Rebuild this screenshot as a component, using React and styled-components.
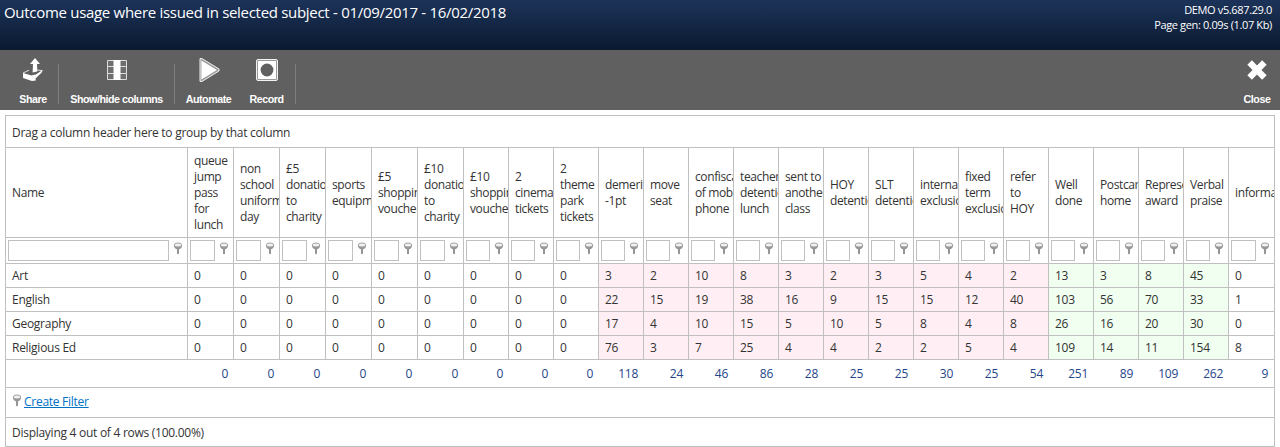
import React from "react";
import styled, { createGlobalStyle } from "styled-components";

const LINE = "#c0c0c0";

const GlobalStyle = createGlobalStyle`
  * { box-sizing: border-box; }
  body {
    margin: 0;
    background: #fff;
    color: #333;
    font: 12px/16px "Open Sans", "Noto Sans", sans-serif;
    letter-spacing: -0.27px;
  }
`;

const Header = styled.header`
  display: flex;
  justify-content: space-between;
  height: 50px;
  padding: 2px 8px 0 4px;
  color: #fff;
  background: linear-gradient(#1c3359, #0b1a30);
`;

const Title = styled.h1`
  margin: 0;
  font-size: 15px;
  font-weight: 400;
  line-height: 20px;
  letter-spacing: -0.3px;
  white-space: nowrap;
`;

const Build = styled.div`
  font-size: 11px;
  line-height: 15px;
  letter-spacing: -0.36px;
  text-align: right;
  white-space: nowrap;
`;

const Toolbar = styled.nav`
  display: flex;
  height: 60px;
  background: #606060;
`;

const ToolButton = styled.button`
  display: flex;
  flex-direction: column;
  align-items: center;
  justify-content: space-between;
  width: ${(p) => p.$width}px;
  height: 60px;
  padding: 5px 0 5px ${(p) => p.$indent || 0}px;
  border: 0;
  background: none;
  color: #fff;
  font: bold 10.7px/12px "Liberation Sans", Arial, sans-serif;
  letter-spacing: -0.46px;
  white-space: nowrap;
  margin-left: ${(p) => (p.$end ? "auto" : 0)};
`;

const Separator = styled.span`
  width: 1px;
  height: 40px;
  margin: 14px 0 0 ${(p) => p.$gap || 0}px;
  background: #7d7d7d;
`;

const Grid = styled.section`
  margin: 5px 5px 0;
  border: 1px solid ${LINE};
`;

const Bar = styled.div`
  display: flex;
  align-items: center;
  height: ${(p) => p.$height}px;
  padding: ${(p) => p.$drop || 0}px 6px 0;
  border-bottom: ${(p) => (p.$last ? 0 : 1)}px solid ${LINE};
`;

const Row = styled.div`
  display: grid;
  grid-template-columns: 182px repeat(6, 46px) repeat(17, 45px) 45px;
  height: ${(p) => p.$height}px;
  border-bottom: 1px solid ${LINE};
`;

const TONES = { bad: "#ffeff4", good: "#f0fff0", plain: "#fff" };

const Cell = styled.div`
  display: flex;
  align-items: center;
  min-width: 0;
  overflow: hidden;
  padding-left: 6px;
  white-space: pre;
  background: ${(p) => TONES[p.$tone || "plain"]};
  border-right: 1px solid ${LINE};
  &:last-child { border-right: 0; }
`;

const HeadCell = styled(Cell)`
  padding-top: 1px;
  letter-spacing: -0.38px;
`;

const FilterCell = styled(Cell)`
  padding: 2px 4px 2px 2px;
  justify-content: space-between;
`;

const FilterInput = styled.input`
  flex: 1;
  min-width: 0;
  height: 21px;
  margin-right: 4px;
  padding: 0;
  border: 1px solid ${LINE};
  background: #fff;
`;

const TotalCell = styled.div`
  padding: 6px 6px 0 0;
  text-align: right;
  color: #24468a;
`;

const FilterLink = styled.a`
  margin: -2px 0 0 2px;
  color: #0072c6;
  text-decoration: underline;
`;

const PinSvg = styled.svg`
  flex: none;
  margin-top: -4px;
`;

const Pin = () => (
  <PinSvg width="10" height="13" viewBox="0 0 10 13">
    <path d="M0.8 3 Q1 6.4 4 7.2 L4 11.5 L5 12.6 L6 11.5 L6 7.2 Q9 6.4 9.2 3 Z" fill="#949494" />
    <ellipse cx="5" cy="3" rx="3.7" ry="2" fill="#f1f1f1" stroke="#a0a0a0" strokeWidth="1" />
  </PinSvg>
);

const ShareIcon = () => (
  <svg width="28" height="28" viewBox="0 0 28 28">
    <path d="M4 18 L10 15.2 M18 15 L23.5 15.6 L17 20.5" stroke="#ddd" fill="none" />
    <path d="M16 3 L21 9 L18 9 L18.3 16.5 L13.6 17.5 L14 9 L11 9 Z" fill="#fff" />
    <path d="M4 18 L12.5 20.5 L16 19.6 L16.8 25.5 L13 26 L4 23 Z M16 20 L23.5 15.2 L22.5 17.8 L16.5 23.5 Z" fill="#fff" />
  </svg>
);

const ColumnsIcon = () => (
  <svg width="28" height="28" viewBox="0 0 28 28">
    <path d="M4.5 5.5h19v19h-19z M4 11.5h20 M4 18.5h20" fill="#6e6e6e" stroke="#dcdcdc" />
    <path d="M10.5 5h7v20h-7z" fill="#fff" />
  </svg>
);

const PlayIcon = () => (
  <svg width="28" height="28" viewBox="0 0 28 28">
    <path d="M5 3.6 L7 3.6 L24 14 L24 16 L7 26.4 L5 26.4 Z" fill="#999" stroke="#f2f2f2" strokeLinejoin="round" />
    <path d="M6.4 5.4 L22 15 L6.4 24.6 Z" fill="#fff" />
  </svg>
);

const RecordIcon = () => (
  <svg width="28" height="28" viewBox="0 0 28 28">
    <rect x="3.5" y="4.5" width="21" height="21" rx="1.5" fill="#999" stroke="#f2f2f2" />
    <rect x="5" y="6" width="18" height="18" fill="#fff" />
    <circle cx="14" cy="15" r="6.4" fill="#606060" />
  </svg>
);

const CloseIcon = () => (
  <svg width="28" height="28" viewBox="0 0 28 28">
    <path d="M6.6 7.6 L21.4 22.4 M21.4 7.6 L6.6 22.4" stroke="#fff" strokeWidth="6.4" />
  </svg>
);

// Each column: heading, one value per subject, total, tone.
const COLUMNS = [
  ["queue\njump\npass\nfor\nlunch", 0, 0, 0, 0, 0],
  ["non\nschool\nuniform\nday", 0, 0, 0, 0, 0],
  ["£5\ndonation\nto\ncharity", 0, 0, 0, 0, 0],
  ["sports\nequipment", 0, 0, 0, 0, 0],
  ["£5\nshopping\nvoucher", 0, 0, 0, 0, 0],
  ["£10\ndonation\nto\ncharity", 0, 0, 0, 0, 0],
  ["£10\nshopping\nvoucher", 0, 0, 0, 0, 0],
  ["2\ncinema\ntickets", 0, 0, 0, 0, 0],
  ["2\ntheme\npark\ntickets", 0, 0, 0, 0, 0],
  ["demerit\n-1pt", 3, 22, 17, 76, 118, "bad"],
  ["move\nseat", 2, 15, 4, 3, 24, "bad"],
  ["confiscation\nof mobile\nphone", 10, 19, 10, 7, 46, "bad"],
  ["teacher\ndetention\nlunch", 8, 38, 15, 25, 86, "bad"],
  ["sent to\nanother\nclass", 3, 16, 5, 4, 28, "bad"],
  ["HOY\ndetention", 2, 9, 10, 4, 25, "bad"],
  ["SLT\ndetention", 3, 15, 5, 2, 25, "bad"],
  ["internal\nexclusion", 5, 15, 8, 2, 30, "bad"],
  ["fixed\nterm\nexclusion", 4, 12, 4, 5, 25, "bad"],
  ["refer\nto\nHOY", 2, 40, 8, 4, 54, "bad"],
  ["Well\ndone", 13, 103, 26, 109, 251, "good"],
  ["Postcard\nhome", 3, 56, 16, 14, 89, "good"],
  ["Represent\naward", 8, 70, 20, 11, 109, "good"],
  ["Verbal\npraise", 45, 33, 30, 154, 262, "good"],
  ["information", 0, 1, 0, 8, 9],
];

const SUBJECTS = ["Art", "English", "Geography", "Religious Ed"];

export default function App() {
  return (
    <>
      <GlobalStyle />
      <Header>
        <Title>Outcome usage where issued in selected subject - 01/09/2017 - 16/02/2018</Title>
        <Build>
          DEMO v5.687.29.0
          <br />
          Page gen: 0.09s (1.07 Kb)
        </Build>
      </Header>
      <Toolbar>
        <ToolButton $width={58} $indent={8}><ShareIcon />Share</ToolButton>
        <Separator />
        <ToolButton $width={115}><ColumnsIcon />Show/hide columns</ToolButton>
        <Separator />
        <ToolButton $width={67}><PlayIcon />Automate</ToolButton>
        <ToolButton $width={49}><RecordIcon />Record</ToolButton>
        <Separator $gap={4} />
        <ToolButton $width={46} $end><CloseIcon />Close</ToolButton>
      </Toolbar>
      <Grid>
        <Bar $height={32} $drop={2}>Drag a column header here to group by that column</Bar>
        <Row $height={90}>
          <HeadCell>Name</HeadCell>
          {COLUMNS.map((c, i) => <HeadCell key={i}>{c[0]}</HeadCell>)}
        </Row>
        <Row $height={26}>
          {["Name", ...COLUMNS].map((_, i) => (
            <FilterCell key={i}><FilterInput /><Pin /></FilterCell>
          ))}
        </Row>
        {SUBJECTS.map((name, r) => (
          <Row key={name} $height={24}>
            <Cell>{name}</Cell>
            {COLUMNS.map((c, i) => <Cell key={i} $tone={c[6]}>{c[r + 1]}</Cell>)}
          </Row>
        ))}
        <Row $height={28}>
          <TotalCell />
          {COLUMNS.map((c, i) => <TotalCell key={i}>{c[5]}</TotalCell>)}
        </Row>
        <Bar $height={30}><Pin /><FilterLink>Create Filter</FilterLink></Bar>
        <Bar $height={28} $drop={2} $last>Displaying 4 out of 4 rows (100.00%)</Bar>
      </Grid>
    </>
  );
}
